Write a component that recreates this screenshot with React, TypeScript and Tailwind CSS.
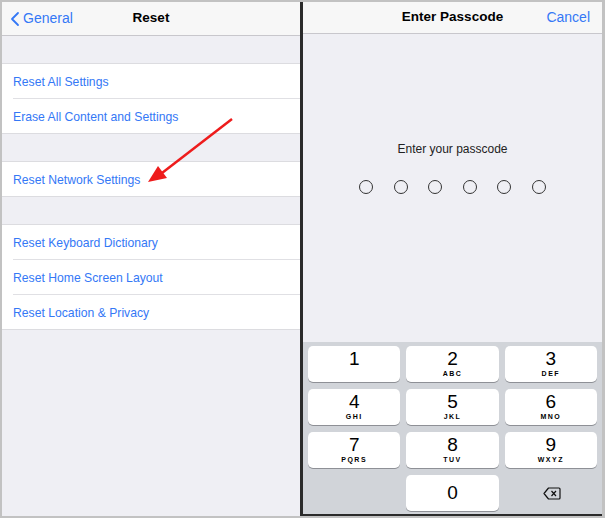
import { ChevronLeft } from 'lucide-react';

const font = { fontFamily: '"Liberation Sans", Arial, sans-serif' };

function Row({ label, last }: { label: string; last?: boolean }) {
    return (
        <div className="bg-white pl-[11px]">
            <div
                className={`flex items-center pt-[2px] text-[12.2px] text-[#3478f6] ${
                    last ? 'h-[34px]' : 'h-[35px] border-b border-[#e0e0e4]'
                }`}
            >
                {label}
            </div>
        </div>
    );
}

function Key({ digit, letters }: { digit: string; letters?: string }) {
    return (
        <div className="h-[36px] bg-white rounded-[5px] shadow-[0_1px_0_0_#8e9096] flex flex-col items-center pt-[3px]">
            <span className="text-[19px] leading-[20px] text-black">{digit}</span>
            {letters && (
                <span className="text-[7px] font-bold tracking-[1.5px] leading-[9px] text-black">
                    {letters}
                </span>
            )}
        </div>
    );
}

export default function App() {
    const keys: [string, string?][] = [
        ['1'],
        ['2', 'ABC'],
        ['3', 'DEF'],
        ['4', 'GHI'],
        ['5', 'JKL'],
        ['6', 'MNO'],
        ['7', 'PQRS'],
        ['8', 'TUV'],
        ['9', 'WXYZ'],
    ];

    return (
        <div
            className="w-[605px] h-[518px] bg-[#c2c2c2] pt-[2px] pl-[2px] pr-[3px] pb-[2px] flex"
            style={font}
        >
            {/* Left: Reset settings */}
            <div className="relative w-[298px] h-full bg-[#efeff4] flex flex-col">
                <div className="h-[34px] bg-[#f7f7f7] border-b border-[#c8c7cc] flex items-center relative">
                    <div className="flex items-center text-[#3478f6] text-[14px] pl-[1px]">
                        <ChevronLeft className="w-[24px] h-[30px]" strokeWidth={1.8} />
                        <span className="-ml-[4px]">General</span>
                    </div>
                    <div className="absolute inset-0 flex items-center justify-center text-[13.5px] font-bold text-black pointer-events-none">
                        Reset
                    </div>
                </div>

                <div className="h-[27px]" />
                <div className="border-y border-[#dcdce0]">
                    <Row label="Reset All Settings" />
                    <Row label="Erase All Content and Settings" last />
                </div>

                <div className="h-[27px]" />
                <div className="border-y border-[#dcdce0]">
                    <Row label="Reset Network Settings" last />
                </div>

                <div className="h-[27px]" />
                <div className="border-y border-[#dcdce0]">
                    <Row label="Reset Keyboard Dictionary" />
                    <Row label="Reset Home Screen Layout" />
                    <Row label="Reset Location & Privacy" last />
                </div>

                {/* Red annotation arrow */}
                <svg
                    className="absolute left-0 top-0"
                    width="298"
                    height="200"
                    viewBox="0 0 298 200"
                >
                    <line x1="230" y1="117" x2="160" y2="171" stroke="#ee1c1c" strokeWidth="2.5" />
                    <polygon points="146,180 156,164 165,176" fill="#ee1c1c" />
                </svg>
            </div>

            <div className="w-[3px] bg-[#2b2b2b]" />

            {/* Right: passcode */}
            <div className="flex-1 h-full bg-[#efeff4] flex flex-col border-b-[2px] border-[#2b2b2b]">
                <div className="h-[32px] bg-[#f7f7f7] border-b border-[#c8c7cc] flex items-center relative">
                    <div className="absolute inset-0 flex items-center justify-center text-[13.5px] font-bold text-black">
                        Enter Passcode
                    </div>
                    <span className="ml-auto mr-[12px] text-[14px] text-[#3478f6] relative">Cancel</span>
                </div>

                <div className="flex-1 flex flex-col items-center pt-[106px]">
                    <div className="text-[12px] text-[#222]">Enter your passcode</div>
                    <div className="flex gap-[20.6px] mt-[22px]">
                        {[0, 1, 2, 3, 4, 5].map((i) => (
                            <div
                                key={i}
                                className="w-[14px] h-[14px] rounded-full border border-[#333]"
                            />
                        ))}
                    </div>
                </div>

                <div className="bg-[#d1d4d9] px-[5px] pt-[4px] pb-[3px] grid grid-cols-3 gap-x-[6px] gap-y-[7px]">
                    {keys.map(([d, l]) => (
                        <Key key={d} digit={d} letters={l} />
                    ))}
                    <div />
                    <div className="h-[36px] bg-white rounded-[5px] shadow-[0_1px_0_0_#8e9096] flex items-center justify-center text-[19px] text-black">
                        0
                    </div>
                    <div className="h-[36px] flex items-center justify-center pl-[3px]">
                        <svg width="18" height="13" viewBox="0 0 18 13" fill="none">
                            <path
                                d="M5.5 1 H16 a1 1 0 0 1 1 1 V11 a1 1 0 0 1 -1 1 H5.5 L1 6.5 Z"
                                stroke="#111"
                                strokeWidth="1.2"
                                strokeLinejoin="round"
                            />
                            <path d="M8.5 4 L13 9 M13 4 L8.5 9" stroke="#111" strokeWidth="1.2" />
                        </svg>
                    </div>
                </div>
            </div>
        </div>
    );
}
